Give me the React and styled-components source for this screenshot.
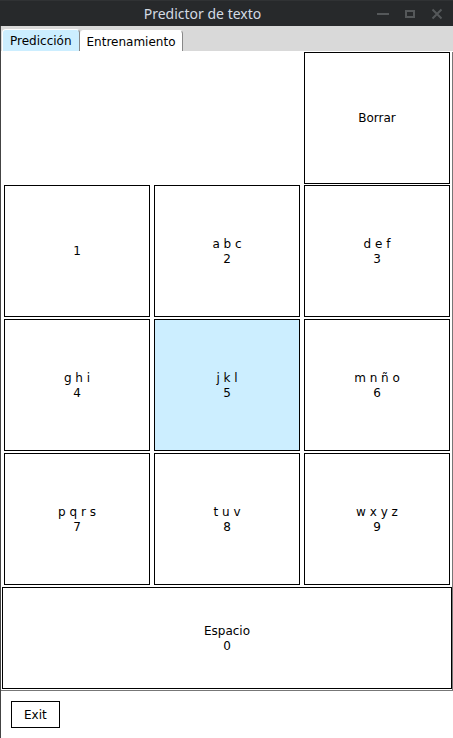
import React, { useState } from "react";
import styled, { createGlobalStyle } from "styled-components";

const GlobalStyle = createGlobalStyle`
  *, *::before, *::after { box-sizing: border-box; }
  body { margin: 0; background: #fff; }
  button { font: inherit; color: inherit; padding: 0; margin: 0; }
`;

const Window = styled.div`
  display: flex;
  flex-direction: column;
  min-height: 100vh;
  background: #fff;
  color: #000;
  font: 12px/15px "DejaVu Sans", sans-serif;
`;

const TitleBar = styled.header`
  display: grid;
  grid-template-columns: 1fr auto 1fr;
  align-items: center;
  height: 26px;
  padding: 0 7px;
  background: #27292b;
  border-top: 1px solid #303234;
`;

const Title = styled.h1`
  grid-column: 2;
  margin: 0;
  padding-right: 48px;
  color: #d3dae3;
  font: 400 14px/20px "Noto Sans", sans-serif;
  white-space: nowrap;
`;

const WindowControls = styled.div`
  display: flex;
  justify-content: flex-end;
  gap: 9px;
`;

const WindowButton = styled.button`
  display: grid;
  place-items: center;
  width: 18px;
  height: 18px;
  border: 0;
  background: transparent;
`;

const Glyph = styled.svg`
  display: block;
  width: 12px;
  height: 12px;
  fill: none;
  stroke: #55585a;
  stroke-width: 2;
`;

const Body = styled.main`
  flex: 1;
  display: flex;
  flex-direction: column;
  border-left: 1px solid #444;
`;

const TabBar = styled.div`
  display: flex;
  align-items: flex-end;
  height: 25px;
  padding-left: 1px;
  background: #d9d9d9;
`;

const Tab = styled.button`
  height: ${(p) => (p.$active ? 22 : 21)}px;
  padding: 2px 7px 0;
  border: 1px solid #fff;
  border-right-color: #888;
  border-bottom: 0;
  border-left-width: ${(p) => (p.$active ? 1 : 0)}px;
  border-radius: 4px 4px 0 0;
  background: ${(p) => (p.$active ? "#cceeff" : "#fff")};
`;

const Panel = styled.section`
  display: flex;
  flex-direction: column;
  gap: 2px;
  margin-top: 1px;
  padding-bottom: 1px;
  border-right: 1px solid #777;
  border-bottom: 1px solid #777;
`;

const KeyRow = styled.div`
  display: grid;
  grid-template-columns: repeat(3, 1fr);
  gap: 4px;
  padding: 0 2px 0 3px;
`;

const TopRows = styled.div`
  display: flex;
  flex-direction: column;
  gap: 1px;
`;

const Display = styled.output`
  grid-column: span 2;
  padding: 8px;
`;

const Key = styled.button`
  min-height: 132px;
  padding-top: ${(p) => (p.$stacked ? 2 : 0)}px;
  border: 1px solid #000;
  background: #fff;
  white-space: pre-line;

  &:hover, &[data-lit="true"] { background: #cceeff; }
`;

const SpaceKey = styled(Key)`
  min-height: 102px;
  margin-left: 1px;
`;

const Footer = styled.footer`
  padding: 10px;
`;

const ExitButton = styled.button`
  padding: 6px 12px 4px;
  border: 1px solid #000;
  background: #fff;
`;

const rows = [
  [["", "1"], ["a b c", "2"], ["d e f", "3"]],
  [["g h i", "4"], ["j k l", "5"], ["m n ñ o", "6"]],
  [["p q r s", "7"], ["t u v", "8"], ["w x y z", "9"]],
];

function Keys({ row, lit, onPress }) {
  return (
    <KeyRow>
      {row.map(([letters, digit]) => (
        <Key
          key={digit}
          $stacked={letters !== ""}
          data-lit={lit === digit}
          onClick={() => onPress(digit)}
        >
          {letters ? `${letters}\n${digit}` : digit}
        </Key>
      ))}
    </KeyRow>
  );
}

export default function App() {
  const [text, setText] = useState("");
  const [lit, setLit] = useState("5");
  const press = (digit) => {
    setLit(digit);
    setText((t) => t + (digit === "0" ? " " : digit));
  };

  return (
    <Window>
      <GlobalStyle />
      <TitleBar>
        <Title>Predictor de texto</Title>
        <WindowControls>
          <WindowButton aria-label="Minimizar">
            <Glyph viewBox="0 0 12 12"><path d="M0 6H12" /></Glyph>
          </WindowButton>
          <WindowButton aria-label="Maximizar">
            <Glyph viewBox="0 0 12 12"><path d="M2 3H10V9H2Z" /></Glyph>
          </WindowButton>
          <WindowButton aria-label="Cerrar">
            <Glyph viewBox="0 0 12 12"><path d="M1.5 1.5L10.5 10.5M10.5 1.5L1.5 10.5" /></Glyph>
          </WindowButton>
        </WindowControls>
      </TitleBar>
      <Body>
        <TabBar role="tablist">
          <Tab role="tab" aria-selected="true" $active>Predicción</Tab>
          <Tab role="tab" aria-selected="false">Entrenamiento</Tab>
        </TabBar>
        <Panel role="tabpanel" aria-label="Predicción">
          <TopRows>
            <KeyRow>
              <Display>{text}</Display>
              <Key onClick={() => setText((t) => t.slice(0, -1))}>Borrar</Key>
            </KeyRow>
            <Keys row={rows[0]} lit={lit} onPress={press} />
          </TopRows>
          <Keys row={rows[1]} lit={lit} onPress={press} />
          <Keys row={rows[2]} lit={lit} onPress={press} />
          <SpaceKey $stacked onClick={() => press("0")}>{"Espacio\n0"}</SpaceKey>
        </Panel>
        <Footer>
          <ExitButton>Exit</ExitButton>
        </Footer>
      </Body>
    </Window>
  );
}
